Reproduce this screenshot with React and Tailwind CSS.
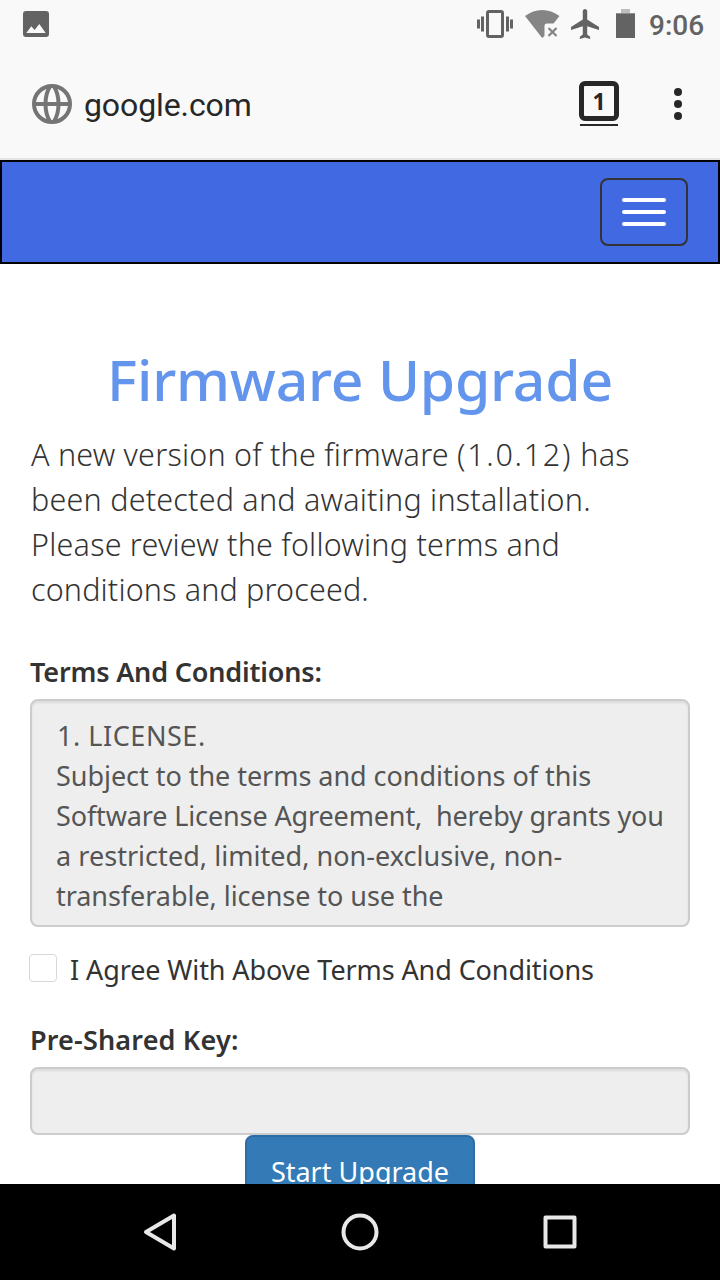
function StatusBar() {
  return (
    <div className="flex h-12 shrink-0 items-center pl-[23px] pr-[16px] text-[#636363]">
      <svg width="26" height="26" viewBox="0 0 26 26" fill="currentColor">
        <path fillRule="evenodd" d="M3 0h20a3 3 0 0 1 3 3v20a3 3 0 0 1-3 3H3a3 3 0 0 1-3-3V3a3 3 0 0 1 3-3zM3.300 22h19.400l-6.400-9-4.700 6.100-3.300-3.900z" />
      </svg>
      <svg className="ml-auto" width="36" height="28" viewBox="0 0 36 28">
        <rect x="10.5" y="1.5" width="15" height="25" rx="1.5" fill="none" stroke="currentColor" strokeWidth="3" />
        <path d="M4 6.500h3v15H4zM0 9.500h3v9H0zM29 6.500h3v15h-3zM33 9.500h3v9h-3z" fill="currentColor" />
      </svg>
      <svg className="ml-[12px]" width="35" height="28" viewBox="0 0 35 28">
        <path d="M0 6Q8 0 17.200 0T34.500 6L28.500 13.500H22Q19.500 13.500 19.500 16V26L17.200 28z" fill="#858585" />
        <path d="M23.500 18l8 8m0-8l-8 8" stroke="#858585" strokeWidth="2.300" />
      </svg>
      <svg className="ml-[11px]" width="28" height="30" viewBox="2 2 19 20" preserveAspectRatio="none" fill="currentColor">
        <path d="M21 16v-2l-8-5V3.500c0-.83-.67-1.500-1.500-1.500S10 2.670 10 3.500V9l-8 5v2l8-2.500V19l-2 1.500V22l3.500-1 3.500 1v-1.500L13 19v-5.500l8 2.500z" />
      </svg>
      <svg className="-mt-px ml-[17px]" width="19" height="29" viewBox="0 0 19 29">
        <path d="M5 0h9v4h5v3H0V4h5z" fill="#bdbdbd" />
        <path d="M0 4.500h19V29H0z" fill="#636363" />
      </svg>
      <span className="ml-[14px] mt-[4px] w-[55px] whitespace-nowrap text-[28px] font-medium leading-[50px]">9:06</span>
    </div>
  );
}

function AddressBar() {
  return (
    <div className="flex h-[112px] shrink-0 items-center border-b-2 border-[#e3e6e3] pl-8 pr-[38px] pt-[2px] text-[#272727]">
      <svg width="40" height="40" viewBox="0 0 40 40" fill="none" stroke="#757575" strokeWidth="4">
        <circle cx="20" cy="20" r="18" />
        <path d="M2 20h36M18 2.500C12 12 12 28 18 37.500M22 2.500C28 12 28 28 22 37.500" />
      </svg>
      <span className="ml-3 mt-[2px] text-[32px] leading-10 tracking-[-0.100px]">google.com</span>
      <div className="ml-auto mt-[-1px] flex flex-col items-center gap-[3px]">
        <div className="flex size-10 items-center justify-center rounded-[6px] border-[5px] border-[#272727] font-['Noto_Sans',sans-serif] text-[23px] font-bold leading-none">1</div>
        <div className="h-[2px] w-[38px] bg-[#272727]" />
      </div>
      <div className="ml-[55px] flex flex-col gap-1">
        <i className="size-2 rounded-full bg-[#272727]" />
        <i className="size-2 rounded-full bg-[#272727]" />
        <i className="size-2 rounded-full bg-[#272727]" />
      </div>
    </div>
  );
}

function MenuBar() {
  return (
    <nav className="flex h-[104px] shrink-0 items-center justify-end border-2 border-black bg-[#4169e1] pr-[30px]">
      <button className="flex h-[68px] w-[88px] flex-col items-center justify-center gap-2 rounded-lg border-2 border-[#333]">
        <i className="h-1 w-11 rounded-[2px] bg-white" />
        <i className="h-1 w-11 rounded-[2px] bg-white" />
        <i className="h-1 w-11 rounded-[2px] bg-white" />
      </button>
    </nav>
  );
}

function UpgradeForm() {
  return (
    <main className="flex min-h-0 flex-1 flex-col overflow-hidden px-[30px] pt-[82px] font-['Noto_Sans',sans-serif] text-[27px] leading-10 text-[#333]">
      <h1 className="h-[66px] shrink-0 whitespace-nowrap text-center text-[57px] font-medium leading-[66px] tracking-[-0.200px] text-[#6495ed]">Firmware Upgrade</h1>
      <p className="mt-[20px] flex shrink-0 flex-col whitespace-pre pl-px text-[30.500px] font-light leading-[45px]">
        <span className="tracking-[0.220px]">A new version of the firmware <span className="tracking-[1.700px]">(1.0.12)</span> has</span>
        <span className="tracking-[0.220px]">been detected and awaiting installation.</span>
        <span className="tracking-[0.220px]">Please review the following terms and</span>
        <span className="tracking-[0.160px]">conditions and proceed.</span>
      </p>
      <div className="mt-10 shrink-0 font-semibold tracking-[-0.180px]">Terms And Conditions:</div>
      <div className="mt-[7px] flex h-[228px] shrink-0 flex-col whitespace-pre rounded-lg border-2 border-[#ccc] bg-[#eee] pl-6 pt-[15px] text-[#555] shadow-[inset_0_2px_2px_rgba(0,0,0,0.075)]">
        <span className="pl-px tracking-[0.550px]">1. LICENSE.</span>
        <span className="tracking-[-0.040px]">Subject to the terms and conditions of this</span>
        <span className="tracking-[-0.130px]">{"Software License Agreement,  hereby grants you"}</span>
        <span className="tracking-[0.040px]">a restricted, limited, non-exclusive, non-</span>
        <span className="tracking-[-0.050px]">transferable, license to use the</span>
      </div>
      <label className="-ml-px mt-[23px] flex shrink-0 items-start">
        <span className="mt-1 size-7 rounded-[4px] border border-[#d8d8d8] bg-white" />
        <span className="ml-[13px] whitespace-nowrap tracking-[-0.100px]">I Agree With Above Terms And Conditions</span>
      </label>
      <div className="mt-[30px] shrink-0 font-semibold tracking-[0.170px]">Pre-Shared Key:</div>
      <div className="mt-[7px] h-[68px] shrink-0 rounded-lg border-2 border-[#ccc] bg-[#eee] shadow-[inset_0_2px_2px_rgba(0,0,0,0.075)]" />
      <button className="h-[68px] w-[230px] shrink-0 self-center whitespace-nowrap rounded-lg border-2 border-[#2e6da4] bg-[#337ab7] pb-[10px] pt-[15px] leading-10 text-white">Start Upgrade</button>
    </main>
  );
}

function NavigationBar() {
  return (
    <footer className="flex h-24 shrink-0 items-center justify-between bg-black px-[140px]">
      <svg width="40" height="40" viewBox="0 0 40 40" fill="none" stroke="#e8e8e8" strokeWidth="4" strokeLinejoin="round">
        <path d="M34 3.500v33L6 20z" />
      </svg>
      <svg width="40" height="40" viewBox="0 0 40 40" fill="none" stroke="#e8e8e8" strokeWidth="4">
        <circle cx="20" cy="20" r="16.500" />
      </svg>
      <svg width="40" height="40" viewBox="0 0 40 40" fill="none" stroke="#e8e8e8" strokeWidth="4" strokeLinejoin="round">
        <path d="M5.500 5.500h29v29h-29z" />
      </svg>
    </footer>
  );
}

export default function App() {
  return (
    <div className="flex h-[1280px] w-[720px] flex-col overflow-hidden bg-white font-['Roboto',sans-serif]">
      <header className="flex h-40 shrink-0 flex-col bg-[#f9f9f9]">
        <StatusBar />
        <AddressBar />
      </header>
      <MenuBar />
      <UpgradeForm />
      <NavigationBar />
    </div>
  );
}
